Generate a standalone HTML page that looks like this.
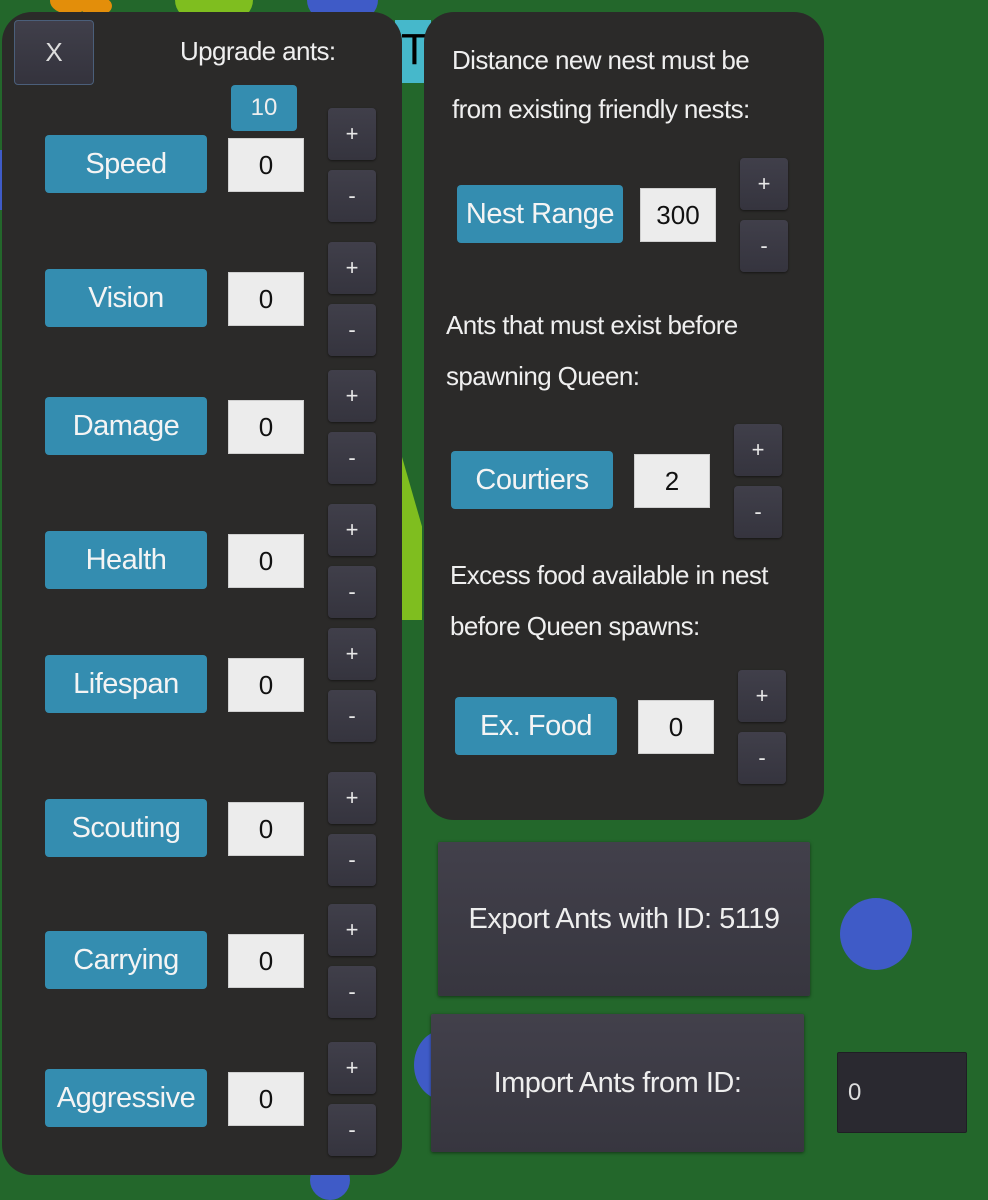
<!DOCTYPE html>
<html><head><meta charset="utf-8"><style>
*{margin:0;padding:0;box-sizing:border-box}
body{width:988px;height:1180px;background:#23672b;position:relative;overflow:hidden;font-family:"Liberation Sans",sans-serif}
.a{position:absolute}
.panel{position:absolute;background:#2b2a29;border-radius:30px}
.lbl{position:absolute;background:#348db0;border-radius:4px;color:#f4f4f4;font-size:29px;letter-spacing:-0.5px;display:flex;align-items:center;justify-content:center;white-space:nowrap;width:162px;height:58px}
.inp{position:absolute;background:#ececec;border:1px solid #cfcfcf;color:#111;font-size:26px;display:flex;align-items:center;justify-content:center;width:76px;height:54px}
.btn{position:absolute;width:48px;height:52px;border-radius:4px;background:linear-gradient(#403f4a,#35343e);box-shadow:0 1px 2px rgba(0,0,0,.5);color:#e8e8e8;font-size:22px;display:flex;align-items:center;justify-content:center}
.txt{position:absolute;color:#efefef;font-size:26px;letter-spacing:-0.6px;white-space:nowrap}
.big{position:absolute;background:linear-gradient(#42404b,#37363f);box-shadow:0 1px 3px rgba(0,0,0,.5);color:#eee;font-size:29px;letter-spacing:-0.5px;display:flex;align-items:center;justify-content:center;border-radius:2px}
</style></head><body>
<div class="a" style="left:50px;top:-12px;width:40px;height:26px;border-radius:50%;background:#e38e0a"></div>
<div class="a" style="left:80px;top:-4px;width:32px;height:20px;border-radius:50%;background:#e38e0a"></div>
<div class="a" style="left:175px;top:-20px;width:78px;height:40px;border-radius:30px;background:#7fbe1f"></div>
<div class="a" style="left:307px;top:-20px;width:71px;height:40px;border-radius:30px;background:#3f5bc7"></div>
<div class="a" style="left:395px;top:20px;width:36px;height:63px;background:#46b8cb;font-size:44px;color:#000;line-height:60px;padding-left:6px">T</div>
<div class="a" style="left:400px;top:450px;width:22px;height:170px;background:#7fbe1f;clip-path:polygon(0 0,100% 45%,100% 100%,0 100%)"></div>
<div class="a" style="left:0;top:150px;width:6px;height:60px;background:#3f5bc7"></div>
<div class="a" style="left:310px;top:1160px;width:40px;height:40px;border-radius:50%;background:#3f5bc7"></div>
<div class="a" style="left:840px;top:898px;width:72px;height:72px;border-radius:50%;background:#3f5bc7"></div>
<div class="a" style="left:414px;top:1030px;width:60px;height:70px;border-radius:50%;background:#3f5bc7"></div>

<div class="panel" style="left:2px;top:12px;width:400px;height:1163px"></div>
<div class="panel" style="left:424px;top:12px;width:400px;height:808px"></div>

<div class="a" style="left:14px;top:20px;width:80px;height:65px;border:1px solid #4b5f7a;border-radius:4px;background:linear-gradient(#403f4a,#34333d);color:#ddd;font-size:26px;display:flex;align-items:center;justify-content:center">X</div>
<div class="txt" style="left:180px;top:36px">Upgrade ants:</div>
<div class="a" style="left:231px;top:85px;width:66px;height:46px;background:#348db0;border-radius:4px;color:#eee;font-size:24px;display:flex;align-items:center;justify-content:center">10</div>

<div class="lbl" style="left:45px;top:135px">Speed</div><div class="inp" style="left:228px;top:138px">0</div>
<div class="btn" style="left:328px;top:108px">+</div><div class="btn" style="left:328px;top:170px">-</div>
<div class="lbl" style="left:45px;top:269px">Vision</div><div class="inp" style="left:228px;top:272px">0</div>
<div class="btn" style="left:328px;top:242px">+</div><div class="btn" style="left:328px;top:304px">-</div>
<div class="lbl" style="left:45px;top:397px">Damage</div><div class="inp" style="left:228px;top:400px">0</div>
<div class="btn" style="left:328px;top:370px">+</div><div class="btn" style="left:328px;top:432px">-</div>
<div class="lbl" style="left:45px;top:531px">Health</div><div class="inp" style="left:228px;top:534px">0</div>
<div class="btn" style="left:328px;top:504px">+</div><div class="btn" style="left:328px;top:566px">-</div>
<div class="lbl" style="left:45px;top:655px">Lifespan</div><div class="inp" style="left:228px;top:658px">0</div>
<div class="btn" style="left:328px;top:628px">+</div><div class="btn" style="left:328px;top:690px">-</div>
<div class="lbl" style="left:45px;top:799px">Scouting</div><div class="inp" style="left:228px;top:802px">0</div>
<div class="btn" style="left:328px;top:772px">+</div><div class="btn" style="left:328px;top:834px">-</div>
<div class="lbl" style="left:45px;top:931px">Carrying</div><div class="inp" style="left:228px;top:934px">0</div>
<div class="btn" style="left:328px;top:904px">+</div><div class="btn" style="left:328px;top:966px">-</div>
<div class="lbl" style="left:45px;top:1069px">Aggressive</div><div class="inp" style="left:228px;top:1072px">0</div>
<div class="btn" style="left:328px;top:1042px">+</div><div class="btn" style="left:328px;top:1104px">-</div>

<div class="txt" style="left:452px;top:45px">Distance new nest must be</div>
<div class="txt" style="left:452px;top:94px">from existing friendly nests:</div>
<div class="lbl" style="left:457px;top:185px;width:166px">Nest Range</div><div class="inp" style="left:640px;top:188px">300</div>
<div class="btn" style="left:740px;top:158px">+</div><div class="btn" style="left:740px;top:220px">-</div>
<div class="txt" style="left:446px;top:310px">Ants that must exist before</div>
<div class="txt" style="left:446px;top:361px">spawning Queen:</div>
<div class="lbl" style="left:451px;top:451px">Courtiers</div><div class="inp" style="left:634px;top:454px">2</div>
<div class="btn" style="left:734px;top:424px">+</div><div class="btn" style="left:734px;top:486px">-</div>
<div class="txt" style="left:450px;top:560px">Excess food available in nest</div>
<div class="txt" style="left:450px;top:611px">before Queen spawns:</div>
<div class="lbl" style="left:455px;top:697px">Ex. Food</div><div class="inp" style="left:638px;top:700px">0</div>
<div class="btn" style="left:738px;top:670px">+</div><div class="btn" style="left:738px;top:732px">-</div>

<div class="big" style="left:438px;top:842px;width:372px;height:154px">Export Ants with ID: 5119</div>
<div class="big" style="left:431px;top:1014px;width:373px;height:138px">Import Ants from ID:</div>
<div class="a" style="left:837px;top:1052px;width:130px;height:81px;background:#2a2930;border:1px solid #1f1e24;border-radius:2px;color:#ddd;font-size:24px;display:flex;align-items:center;padding-left:10px">0</div>
</body></html>
